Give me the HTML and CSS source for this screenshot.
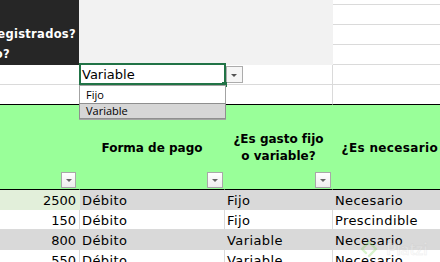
FILE: index.html
```html
<!DOCTYPE html>
<html lang="es">
<head>
<meta charset="utf-8">
<title>Gastos</title>
<link rel="stylesheet" href="styles.css">
</head>
<body>
<div class="sheet">
  <div class="c dark">
    <span class="ql">¿Tienes todos tus gastos registrados?</span>
    <span class="ql ql2">¿Sí o no?</span>
  </div>
  <div class="c gray"></div>
  <div class="c"></div>
  <div class="c"></div>
  <div class="c"></div>
  <div class="c"></div>

  <div class="c"></div>
  <div class="c sel">Variable
    <div class="list">
      <div class="it">Fijo</div>
      <div class="it on">Variable</div>
    </div>
  </div>
  <div class="c"><span class="dd"></span></div>
  <div class="c"></div>

  <div class="c blk"></div>
  <div class="c blk"></div>
  <div class="c blk"></div>
  <div class="c blk"></div>

  <div class="c h"><span class="fb fb-a"></span></div>
  <div class="c h"><span>Forma de pago</span><span class="fb"></span></div>
  <div class="c h"><span>¿Es gasto fijo<br>o variable?</span><span class="fb"></span></div>
  <div class="c h h-d"><span>¿Es necesario<span class="qm">?</span></span><span class="fb"></span></div>

  <div class="c d num lg">2500</div>
  <div class="c d g">Débito</div>
  <div class="c d g">Fijo</div>
  <div class="c d g">Necesario</div>

  <div class="c d num">150</div>
  <div class="c d">Débito</div>
  <div class="c d">Fijo</div>
  <div class="c d">Prescindible</div>

  <div class="c d num g">800</div>
  <div class="c d g">Débito</div>
  <div class="c d g">Variable</div>
  <div class="c d g">Necesario</div>

  <div class="c d num">550</div>
  <div class="c d">Débito</div>
  <div class="c d">Variable</div>
  <div class="c d">Necesario</div>
</div>
<div class="wm">
  <svg width="18" height="18" viewBox="0 0 18 18"><polyline points="6,13 2,9 9,2 16,9 9,16" fill="none" stroke="#7ed957" stroke-width="2.4" stroke-linejoin="round" stroke-linecap="round"/></svg>
  <span>Platzi</span>
</div>
</body>
</html>
```
FILE: styles.css
```css
* { box-sizing: border-box; margin: 0; padding: 0; }
html, body { width: 440px; height: 262px; overflow: hidden; background: #fff; }
body { position: relative; font-family: "DejaVu Sans", sans-serif; color: #000; }

.sheet {
  display: grid;
  grid-template-columns: 80px 145px 108px 126px;
  grid-template-rows: 5px repeat(5, 20px) 85px repeat(4, 20px);
  width: 459px;
}

.c {
  position: relative;
  min-width: 0;
  border-right: 1px solid #dadada;
  border-bottom: 1px solid #dadada;
}

.dark {
  grid-column: 1;
  grid-row: 1 / span 4;
  background: #262626;
  border-color: transparent;
  border-right-color: #f2f2f2;
  overflow: hidden;
  display: flex;
  flex-direction: column;
  justify-content: flex-end;
  align-items: flex-end;
  padding-right: 3px;
  color: #fff;
  font-weight: bold;
  font-size: 11.5px;
  letter-spacing: 0.3px;
  line-height: 20px;
  white-space: nowrap;
}
.ql2 { margin-right: 66px; }

.gray {
  grid-column: 2 / span 2;
  grid-row: 1 / span 4;
  background: #f2f2f2;
  border-color: transparent;
}

.sel {
  font-size: 13px;
  line-height: 18px;
  padding: 1px 2px 0;
  white-space: nowrap;
}
.sel::after {
  content: "";
  position: absolute;
  top: -2px; left: -1px; right: -2px; bottom: -1px;
  border: 2px solid #217346;
  z-index: 4;
}
.sel::before {
  content: "";
  position: absolute;
  right: -3px; bottom: -3px;
  width: 5px; height: 5px;
  background: #217346;
  z-index: 5;
}

.list {
  position: absolute;
  top: 20px; left: -1px;
  width: 147px; height: 35px;
  background: #fff;
  border: 1px solid #a3a3a3;
  z-index: 6;
  font-family: "Open Sans", sans-serif;
  font-size: 11px;
}
.it { height: 17px; line-height: 17px; padding-left: 6px; }
.it.on {
  height: 16px;
  line-height: 14px;
  margin: 0 -1px;
  background: #d6d6d6;
  border: 1px solid #8f8f8f;
}

.dd {
  position: absolute;
  left: 1px; top: 1px;
  width: 17px; height: 17px;
  border: 1px solid #acacac;
  background: #f6f6f6;
}
.dd::after {
  content: "";
  position: absolute;
  left: 4px; top: 7px;
  border-left: 3px solid transparent;
  border-right: 3px solid transparent;
  border-top: 3px solid #555;
}

.blk { border-bottom-color: #000; }

.h {
  background: #99ff99;
  border-color: transparent;
  border-bottom: 1px solid #000;
  display: flex;
  align-items: center;
  justify-content: center;
  text-align: center;
  padding-top: 2px;
  font-weight: bold;
  font-size: 12px;
  line-height: 17px;
  white-space: nowrap;
}
.h-d { letter-spacing: 0.35px; }
.qm { margin-left: 4px; }

.fb {
  position: absolute;
  right: 1px; bottom: 1px;
  width: 16px; height: 16px;
  border: 1px solid #a8a8a8;
  background: linear-gradient(#ffffff, #ededed);
}
.fb-a { right: 3px; width: 15px; }
.fb::after {
  content: "";
  position: absolute;
  left: 4px; top: 6px;
  border-left: 3px solid transparent;
  border-right: 3px solid transparent;
  border-top: 3px solid #666;
}

.d {
  font-size: 13px;
  letter-spacing: 0.4px;
  line-height: 18px;
  padding: 2px 2px 0;
  white-space: nowrap;
  overflow: hidden;
}
.num { text-align: right; padding-right: 3px; letter-spacing: 0; }
.g { background: #d9d9d9; border-color: transparent; }
.lg { background: #e2efda; border-color: transparent; }

.wm {
  position: absolute;
  left: 360px; top: 238px;
  display: flex;
  align-items: center;
  gap: 8px;
  opacity: 0.3;
  pointer-events: none;
}
.wm span {
  font-family: "Lato", sans-serif;
  font-weight: bold;
  font-size: 17px;
  color: #f4f4f4;
  -webkit-text-stroke: 0.4px #bdbdbd;
}
```
